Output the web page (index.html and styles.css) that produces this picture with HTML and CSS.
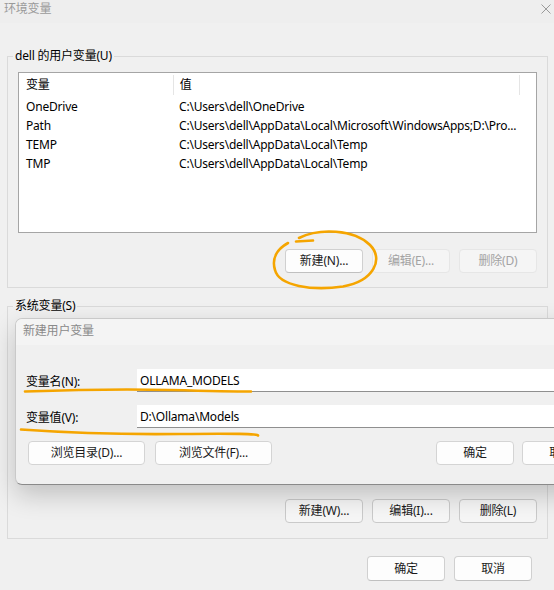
FILE: index.html
```html
<!DOCTYPE html>
<html lang="zh-CN">
<head>
    <meta charset="UTF-8">
    <meta name="viewport" content="width=device-width, initial-scale=1.0">
    <title>环境变量</title>
    <link rel="stylesheet" href="styles.css">
</head>
<body>
    <div class="window">
        <div class="titlebar">
            <span class="title">环境变量</span>
            <svg class="close" width="10" height="10" viewBox="0 0 10 10">
                <path d="M0.5 0.5 L9.5 9.5 M9.5 0.5 L0.5 9.5" stroke="#9a9a9a" stroke-width="1" fill="none"/>
            </svg>
        </div>
        <div class="content">
            <fieldset class="group">
                <legend>dell 的用户变量(U)</legend>
                <div class="listview">
                    <div class="lv-head">
                        <div class="col name">变量</div>
                        <div class="col value">值</div>
                        <div class="col rest"></div>
                    </div>
                    <div class="lv-row"><div class="col name">OneDrive</div><div class="col value">C:\Users\dell\OneDrive</div></div>
                    <div class="lv-row"><div class="col name">Path</div><div class="col value">C:\Users\dell\AppData\Local\Microsoft\WindowsApps;D:\Pro...</div></div>
                    <div class="lv-row"><div class="col name">TEMP</div><div class="col value">C:\Users\dell\AppData\Local\Temp</div></div>
                    <div class="lv-row"><div class="col name">TMP</div><div class="col value">C:\Users\dell\AppData\Local\Temp</div></div>
                </div>
                <div class="btn-row">
                    <button class="btn">新建(N)...</button>
                    <button class="btn" disabled>编辑(E)...</button>
                    <button class="btn" disabled>删除(D)</button>
                </div>
            </fieldset>

            <fieldset class="group sys">
                <legend>系统变量(S)</legend>
                <div class="listview"></div>
                <div class="btn-row">
                    <button class="btn">新建(W)...</button>
                    <button class="btn">编辑(I)...</button>
                    <button class="btn">删除(L)</button>
                </div>
            </fieldset>

            <div class="footer">
                <button class="btn">确定</button>
                <button class="btn">取消</button>
            </div>
        </div>

        <div class="dialog">
            <div class="dlg-title">新建用户变量</div>
            <div class="dlg-body">
                <div class="field">
                    <label for="varname">变量名(N):</label>
                    <input type="text" id="varname" value="OLLAMA_MODELS">
                </div>
                <div class="field">
                    <label for="varvalue">变量值(V):</label>
                    <input type="text" id="varvalue" value="D:\Ollama\Models">
                </div>
                <div class="dlg-buttons">
                    <button class="btn wide">浏览目录(D)...</button>
                    <button class="btn wide">浏览文件(F)...</button>
                    <span class="spacer"></span>
                    <button class="btn">确定</button>
                    <button class="btn">取消</button>
                </div>
            </div>
        </div>

        <!-- hand-drawn highlights -->
        <svg class="marks" width="554" height="590" viewBox="0 0 554 590">
            <g fill="none" stroke="#f5a500" stroke-width="2.6" stroke-linecap="round">
                <path d="M313 240.5 L296 241.5"/>
                <path d="M299 238 C319 228 354 229 370 245 C384 259 374 281 343 286.5 C312 291 279 286 275 270 C271 257 279 248 288 243"/>
                <path d="M25 391.5 Q110 388.5 170 390 T251 391.5"/>
                <path d="M21 429.5 Q100 435 180 434 T258 435.5"/>
            </g>
        </svg>
    </div>
</body>
</html>
```

FILE: styles.css
```css
body {
    margin: 0;
    background-color: #f0f0f0;
    font-family: "Noto Sans", "Noto Sans CJK SC", sans-serif;
    font-size: 12px;
    letter-spacing: -0.2px;
    color: #000;
}

.window {
    position: relative;
    width: 554px;
    height: 590px;
    overflow: hidden;
    background-color: #f0f0f0;
}

.titlebar {
    height: 23px;
    display: flex;
    justify-content: space-between;
    align-items: flex-start;
    padding: 0 3px 0 4px;
    background-color: #eeeeee;
}

.title {
    color: #9a9a9a;
    line-height: 18px;
}

.close {
    margin-top: 4px;
}

.content {
    padding: 0 6px 0 7px;
}

.group {
    margin: 25px 0 0 0;
    padding: 8px 10px 14px 10px;
    border: 1px solid #dadada;
    min-width: 0;
}

.group legend {
    padding: 0 2px;
    margin-left: -5px;
    line-height: 16px;
}

.group.sys {
    margin-top: 10px;
    padding-bottom: 15px;
}

.listview {
    height: 159px;
    border: 1px solid #a5a5a5;
    background-color: #fff;
}

.lv-head {
    display: flex;
    height: 24px;
    align-items: center;
}

.lv-head .col {
    height: 20px;
    line-height: 20px;
    border-right: 1px solid #e5e5e5;
}

.lv-head .rest {
    flex: 0 0 16px;
    border-right: none;
}

.lv-row {
    display: flex;
    height: 19px;
    line-height: 19px;
}

.col {
    white-space: nowrap;
    overflow: hidden;
}

.col.name {
    width: 147px;
    padding-left: 7px;
}

.col.value {
    width: 340px;
    padding-left: 6px;
}

.lv-row .col.value {
    width: 350px;
}

.btn-row {
    display: flex;
    justify-content: flex-end;
    gap: 9px;
    margin-top: 16px;
}

.btn {
    flex-shrink: 0;
    width: 78px;
    height: 24px;
    padding: 0;
    font-family: inherit;
    font-size: 12px;
    letter-spacing: inherit;
    line-height: 22px;
    color: #1a1a1a;
    background-color: #fdfdfd;
    border: 1px solid #d0d0d0;
    border-bottom-color: #c0c0c0;
    border-radius: 4px;
}

.btn:disabled {
    color: #a3a3a3;
    background-color: #f5f5f5;
    border-color: #e6e6e6;
}

.sys .btn {
    background-color: #f6f6f6;
    border-color: #cacaca;
}

.footer {
    display: flex;
    justify-content: flex-end;
    gap: 9px;
    margin-top: 17px;
    padding-right: 16px;
}

.footer .btn {
    height: 25px;
}

.dialog {
    position: absolute;
    left: 15px;
    top: 318px;
    width: 580px;
    height: 165px;
    border: 1px solid #c9c9c9;
    border-bottom-color: #8a8a8a;
    border-radius: 7px 0 0 7px;
    background-color: #f0f0f0;
    box-shadow: 0 10px 26px rgba(0, 0, 0, 0.2);
    overflow: hidden;
}

.dlg-title {
    height: 26px;
    line-height: 24px;
    padding-left: 7px;
    color: #8a8a8a;
    background-color: #f4f4f4;
}

.dlg-body {
    padding: 24px 0 0 10px;
}

.field {
    display: flex;
    align-items: center;
    height: 23px;
    margin-bottom: 13px;
}

.field label {
    width: 111px;
}

.field input {
    flex: 1;
    height: 23px;
    box-sizing: border-box;
    padding: 0 0 0 3px;
    font-family: inherit;
    font-size: 12px;
    letter-spacing: inherit;
    color: #000;
    background-color: #fff;
    border: none;
    border-bottom: 1px solid #8f8f8f;
    outline: none;
}

.dlg-buttons {
    display: flex;
    gap: 10px;
    margin-top: 3px;
    padding-left: 2px;
}

.dlg-buttons .btn {
    border-color: #d4d4d4;
}

.dlg-buttons .btn.wide {
    width: 117px;
}

.spacer {
    flex-shrink: 0;
    width: 144px;
}

.dlg-buttons .btn + .btn:last-child {
    margin-left: -2px;
}

.marks {
    position: absolute;
    left: 0;
    top: 0;
    pointer-events: none;
}
```
